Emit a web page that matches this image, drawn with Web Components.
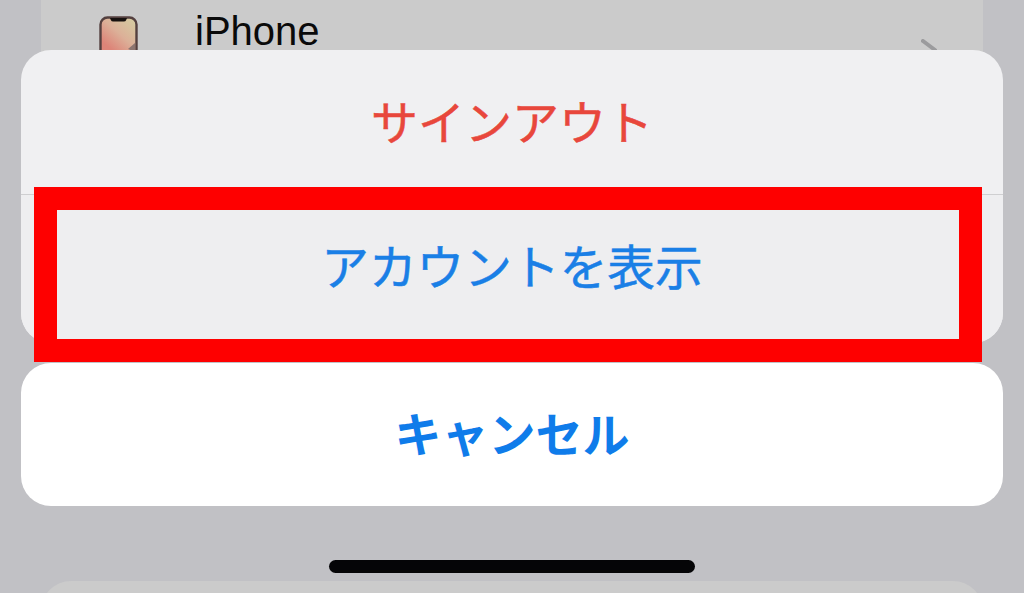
<!DOCTYPE html>
<html lang="ja">
<head>
<meta charset="utf-8">
<title>Sign out sheet</title>
<style>
  html, body { margin: 0; height: 593px; overflow: hidden; background: #c1c1c5; }
  body { font-family: "Liberation Sans", "Noto Sans CJK JP", sans-serif; }
</style>
</head>
<body>
<settings-screen>
  <device-row slot="list" name="iPhone"></device-row>
</settings-screen>
<action-sheet>
  <sheet-button slot="actions" tone="destructive">サインアウト</sheet-button>
  <sheet-button slot="actions" tone="default" divider>アカウントを表示</sheet-button>
  <sheet-button slot="cancel" tone="cancel">キャンセル</sheet-button>
</action-sheet>
<home-indicator></home-indicator>

<script>
(function () {
    'use strict';

    class SettingsScreen extends HTMLElement {
        constructor() {
            super();
            this.attachShadow({ mode: 'open' });
        }

        connectedCallback() {
            this.shadowRoot.innerHTML = `
                <style>
                    :host { display: flex; flex-direction: column; gap: 456px; height: 593px; padding: 0 41px; box-sizing: border-box; overflow: hidden; }
                    .card { flex: none; background: #cbcbcb; }
                    .top { height: 125px; border-radius: 0 0 30px 30px; }
                    .next { height: 60px; border-radius: 30px 30px 0 0; }
                </style>
                <div class="card top"><slot name="list"></slot></div>
                <div class="card next"></div>
            `;
        }
    }

    class DeviceRow extends HTMLElement {
        constructor() {
            super();
            this.attachShadow({ mode: 'open' });
        }

        connectedCallback() {
            this.shadowRoot.innerHTML = `
                <style>
                    :host { display: flex; align-items: flex-start; height: 125px; padding: 16px 0 0 58px; box-sizing: border-box; position: relative; color: #0a0a0a; }
                    svg { flex: none; display: block; }
                    .name { margin: -6px 0 0 57px; font: 40px/42px "Liberation Sans", sans-serif; }
                    .chevron { position: absolute; top: 39px; left: 880px; }
                </style>
                <svg width="39" height="60" viewBox="0 0 39 60">
                    <defs>
                        <linearGradient id="wall" x1="0.75" y1="0" x2="0.4" y2="0.62">
                            <stop offset="0" stop-color="#d6c8a0"/>
                            <stop offset="0.5" stop-color="#dcb098"/>
                            <stop offset="1" stop-color="#dd8478"/>
                        </linearGradient>
                    </defs>
                    <rect x="1.5" y="1.5" width="36" height="57" rx="7" fill="url(#wall)" stroke="#54403f" stroke-width="2.4"/>
                    <path d="M11 2h17l-.8 2q-.6 1.6-2.4 1.6H14.2q-1.8 0-2.4-1.6z" fill="#17110f"/>
                    <path d="M36 27l-7 6 7 3z" fill="#8c7570"/>
                </svg>
                <span class="name">${this.getAttribute('name')}</span>
                <svg class="chevron" width="16" height="20" viewBox="0 0 16 20">
                    <path d="M2 2l12 9" fill="none" stroke="#9b9b9d" stroke-width="4" stroke-linecap="round"/>
                </svg>
            `;
        }
    }

    class ActionSheet extends HTMLElement {
        constructor() {
            super();
            this.attachShadow({ mode: 'open' });
        }

        connectedCallback() {
            this.shadowRoot.innerHTML = `
                <style>
                    :host { display: flex; flex-direction: column; gap: 20px; position: absolute; left: 21px; top: 50px; width: 982px; }
                    .group { display: flex; flex-direction: column; border-radius: 30px; overflow: hidden; }
                    .actions { height: 293px; background: #f0f0f2; }
                    .cancel { height: 143px; background: #fff; }
                    /* annotation drawn over the screenshot */
                    .frame { position: absolute; left: 13px; top: 137px; width: 948px; height: 175px; box-sizing: border-box; border: 23px solid #fe0000; pointer-events: none; }
                </style>
                <div class="group actions"><slot name="actions"></slot></div>
                <div class="group cancel"><slot name="cancel"></slot></div>
                <div class="frame"></div>
            `;
        }
    }

    class SheetButton extends HTMLElement {
        constructor() {
            super();
            this.attachShadow({ mode: 'open' });
        }

        connectedCallback() {
            this.shadowRoot.innerHTML = `
                <style>
                    :host { display: flex; flex: 1; align-items: center; justify-content: center; box-sizing: border-box; font-family: "Noto Sans CJK JP", sans-serif; font-size: 47.7px; line-height: 60px; padding-bottom: 8px; -webkit-text-stroke: 0.5px currentColor; }
                    :host([tone="destructive"]) { color: #e8473c; font-size: 47px; flex: none; height: 144px; padding-bottom: 4px; }
                    :host([tone="default"]) { color: #1a7fe6; background: #eeeef0; }
                    :host([tone="cancel"]) { color: #0f7cea; font-size: 47px; font-weight: 700; padding-bottom: 6px; -webkit-text-stroke: 0; }
                    :host([divider]) { border-top: 1px solid #cfcfd1; }
                </style>
                <slot></slot>
            `;
        }
    }

    class HomeIndicator extends HTMLElement {
        constructor() {
            super();
            this.attachShadow({ mode: 'open' });
        }

        connectedCallback() {
            this.shadowRoot.innerHTML = `
                <style>
                    :host { display: block; position: absolute; left: 329px; top: 560px; width: 366px; height: 13px; border-radius: 7px; background: #050507; }
                </style>
            `;
        }
    }

    customElements.define('settings-screen', SettingsScreen);
    customElements.define('device-row', DeviceRow);
    customElements.define('action-sheet', ActionSheet);
    customElements.define('sheet-button', SheetButton);
    customElements.define('home-indicator', HomeIndicator);
})();
</script>
</body>
</html>
